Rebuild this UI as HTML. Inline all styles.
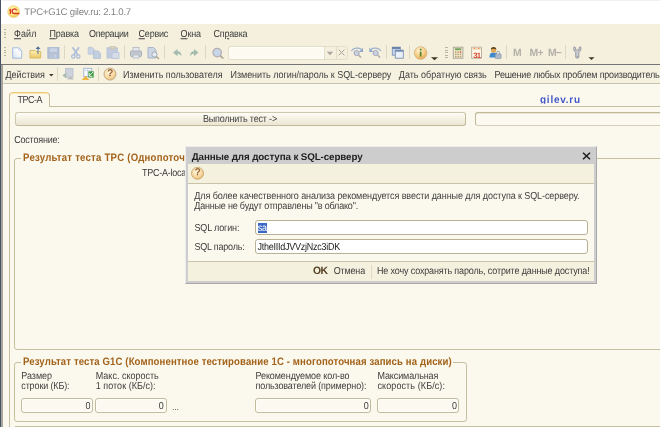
<!DOCTYPE html>
<html><head><meta charset="utf-8">
<style>
html,body{margin:0;padding:0;}
body{width:660px;height:427px;overflow:hidden;position:relative;background:#fbf9ed;font-family:"Liberation Sans",sans-serif;font-size:8.8px;color:#222;text-rendering:geometricPrecision;}
.a{position:absolute;}
.t{position:absolute;white-space:nowrap;line-height:12px;filter:blur(0.350px);}
svg{filter:blur(0.300px);}
u{text-decoration:underline;text-decoration-thickness:0.700px;text-underline-offset:1px;text-decoration-color:#555}
.sep{position:absolute;width:1px;background:#ddd8c2;}
.inp{position:absolute;background:#fff;border:1px solid #b9b196;border-radius:3px;box-sizing:border-box;}
.ro{background:#fcfaf0;box-shadow:inset 0 0 0 1px #fffffb;border-color:#c1ba9c}
.grp{position:absolute;border:1px solid #c5be9f;border-radius:3px;box-sizing:border-box;}
.gtbg{position:absolute;background:#fbf9ed;height:4px}
</style></head><body>
<!-- title bar -->
<div class="a" style="left:0;top:0;width:660px;height:24px;background:#fff"></div>
<div class="a" style="left:2px;top:0;width:658px;height:1px;background:#f1f1f1"></div>
<svg class="a" style="left:7px;top:4.500px" width="14" height="14" viewBox="0 0 14 14"><defs><radialGradient id="g1c" cx="0.450" cy="0.400" r="0.600"><stop offset="0" stop-color="#fffbd8"/><stop offset="0.550" stop-color="#fbe88a"/><stop offset="1" stop-color="#eec44a"/></radialGradient></defs><circle cx="6.600" cy="6.600" r="6.100" fill="url(#g1c)" stroke="#ecd9a0" stroke-width="0.500"/><path d="M2.400 5.300 L3.400 4.700 V9 M9.600 5.400 A2.300 2.300 0 1 0 7.800 8.500 H12.400" fill="none" stroke="#de3a22" stroke-width="1.350"/></svg>
<!-- menu + toolbar bg -->
<div class="a" style="left:0;top:24px;width:660px;height:40px;background:#f4f0dd"></div>
<div class="a" style="left:0;top:64px;width:660px;height:1px;background:#757575"></div>
<div class="a" style="left:0;top:65px;width:660px;height:18px;background:#f6f2e1"></div>
<div class="a" style="left:0;top:83px;width:660px;height:1px;background:#c9c3ab"></div>
<!-- window left border -->
<div class="a" style="left:0;top:0;width:1.400px;height:427px;background:#465265"></div>
<div class="a" style="left:1.400px;top:65px;width:1.300px;height:362px;background:#a9a79d"></div>
<!-- grips -->
<div class="a" style="left:3.500px;top:29.300px;width:2.200px;height:8.500px;background:repeating-linear-gradient(#b9b49c 0 1px,transparent 1px 2.500px)"></div>
<div class="a" style="left:3.500px;top:46.800px;width:2.200px;height:10.500px;background:repeating-linear-gradient(#b9b49c 0 1px,transparent 1px 2.500px)"></div>
<div class="a" style="left:445px;top:47px;width:2.600px;height:11px;background:repeating-linear-gradient(#b9b49c 0 1px,transparent 1px 2.500px)"></div>
<!-- toolbar separators -->
<div class="sep" style="left:64px;top:45px;height:14px"></div>
<div class="sep" style="left:124px;top:45px;height:14px"></div>
<div class="sep" style="left:164px;top:45px;height:14px"></div>
<div class="sep" style="left:205px;top:45px;height:14px"></div>
<div class="sep" style="left:386px;top:45px;height:14px"></div>
<div class="sep" style="left:409px;top:45px;height:14px"></div>
<div class="sep" style="left:506px;top:45px;height:14px"></div>
<div class="sep" style="left:565px;top:45px;height:14px"></div>
<!-- toolbar icons -->
<svg class="a" style="left:0;top:43px" width="660" height="21" viewBox="0 43 660 21">
<!-- new -->
<defs><linearGradient id="gn" x1="1" y1="0" x2="0" y2="1"><stop offset="0.300" stop-color="#ffffff"/><stop offset="1" stop-color="#d4e1f3"/></linearGradient><linearGradient id="gf" x1="0" y1="0" x2="0" y2="1"><stop offset="0" stop-color="#fcf0b4"/><stop offset="1" stop-color="#eac869"/></linearGradient></defs>
<path d="M12.700 47.800 H18.800 L21.700 50.700 V58.200 H12.700 Z" fill="url(#gn)" stroke="#a5bcde" stroke-width="1"/><path d="M18.800 47.800 V50.700 H21.700" fill="none" stroke="#b9cbe6" stroke-width="0.700"/>
<!-- open -->
<path d="M30 50.500 H35 L36 51.500 H40.700 V58 H30 Z" fill="url(#gf)" stroke="#d6b65c" stroke-width="0.900"/><path d="M38 46.300 L35.600 49 H40.400 Z" fill="#47698f"/><path d="M38 48.500 V54" stroke="#5f7f9f" stroke-width="1.100"/>
<!-- save -->
<rect x="47.800" y="47.500" width="11.200" height="10.800" fill="#b4c0d6" stroke="#a9b7cf" stroke-width="0.800"/><rect x="50" y="48.300" width="7" height="3.700" fill="#c9d3e3"/><rect x="51" y="54.300" width="5.500" height="3.700" fill="#c5cedd"/><rect x="52" y="55" width="1.500" height="2.500" fill="#a9b7cf"/>
<!-- cut -->
<path d="M72.500 47.300 L77.800 55 M79 47.300 L73.700 55" stroke="#b1c0da" stroke-width="1.900" fill="none"/><circle cx="73.300" cy="56.500" r="1.700" fill="none" stroke="#a9badb" stroke-width="1.200"/><circle cx="78.300" cy="56.500" r="1.700" fill="none" stroke="#a9badb" stroke-width="1.200"/>
<!-- copy -->
<path d="M88.200 47.400 H92.300 L94.500 49.600 V54.200 H88.200 Z" fill="#cad3e3" stroke="#b7c3d9" stroke-width="0.800"/><path d="M93.500 51 H98.300 L100.500 53.200 V58.400 H93.500 Z" fill="#c3cde0" stroke="#b1bed6" stroke-width="0.800"/>
<!-- paste -->
<rect x="107" y="47.800" width="10.300" height="10.200" fill="#c2ccde" stroke="#b3bfd5" stroke-width="0.800"/><rect x="110.500" y="46.300" width="4.500" height="2.600" fill="#dcd6c0" stroke="#c3bda5" stroke-width="0.600"/><rect x="112" y="52.600" width="7" height="6" fill="#d6dde9" stroke="#b7c3d9" stroke-width="0.800"/>
<!-- print -->
<rect x="130.500" y="51" width="11" height="5.500" rx="1" fill="#c3c7cf" stroke="#a9afba"/><rect x="133" y="47.500" width="6" height="3.500" fill="#e3e6ec" stroke="#b1b7c2" stroke-width="0.8"/><rect x="133" y="55" width="6" height="3" fill="#e9ebf0" stroke="#b1b7c2" stroke-width="0.8"/>
<!-- preview -->
<path d="M148 47.5 H153.500 L156 50 V58 H148 Z" fill="#ccd5e3" stroke="#a9b6cc"/><circle cx="154.500" cy="54.500" r="2.600" fill="#e4ebf5" stroke="#a3a9b5" stroke-width="1"/><path d="M156.500 56.500 L159 59" stroke="#b5a78f" stroke-width="1.500"/>
<!-- undo -->
<path d="M173 52.500 L177.500 49 V51.300 C180 51.300 181.500 53 181.500 56.300 C180.500 54.600 179.500 54 177.500 54 V56.200 Z" fill="#a3bcae"/>
<!-- redo -->
<path d="M198.500 52.500 L194 49 V51.300 C191.500 51.300 190 53 190 56.300 C191 54.600 192 54 194 54 V56.200 Z" fill="#a3bcae"/>
<!-- search magnifier -->
<path d="M220.300 55.800 L223.300 58.600" stroke="#b7a99b" stroke-width="1.900"/><circle cx="217.200" cy="52.600" r="4.200" fill="#c8d6ea" stroke="#b5abb0" stroke-width="1.300"/>
<!-- find next/prev -->
<g><path d="M358.500 55 L361 57.600" stroke="#b3a9b0" stroke-width="1.500"/><circle cx="356.600" cy="53" r="2.600" fill="#c9d1e0" stroke="#a9a9ba" stroke-width="1"/><path d="M351.300 51 C353.500 47.800 358.500 47.300 361.500 49.500" fill="none" stroke="#9bb0d0" stroke-width="1.300"/><path d="M363 47.800 V52 H359 Z" fill="#8fa6cc"/></g>
<g><path d="M377.500 55 L380 57.600" stroke="#b3a9b0" stroke-width="1.500"/><circle cx="375.600" cy="53" r="2.600" fill="#c9d1e0" stroke="#a9a9ba" stroke-width="1"/><path d="M381 51 C378.800 47.800 373.800 47.300 370.800 49.500" fill="none" stroke="#9bb0d0" stroke-width="1.300"/><path d="M369.300 47.800 V52 H373.300 Z" fill="#8fa6cc"/></g>
<!-- windows -->
<rect x="392.300" y="47.200" width="8" height="8" fill="#c7d5ea" stroke="#7f95b8" stroke-width="0.900"/><rect x="392.300" y="47.200" width="8" height="1.600" fill="#56759f"/><rect x="395.300" y="50.200" width="8" height="8" fill="#eaf0f8" stroke="#7d90b2" stroke-width="0.900"/><rect x="395.300" y="50.200" width="8" height="1.500" fill="#6c86b0"/>
<!-- info -->
<defs><radialGradient id="gi" cx="0.4" cy="0.3" r="0.8"><stop offset="0" stop-color="#fff3d4"/><stop offset="0.550" stop-color="#f7cd84"/><stop offset="1" stop-color="#dd9c40"/></radialGradient></defs>
<circle cx="420.600" cy="53" r="6.300" fill="url(#gi)" stroke="#d2b382" stroke-width="0.800"/><rect x="419.800" y="51.600" width="1.700" height="5" fill="#55802a"/><rect x="419.800" y="48.800" width="1.700" height="1.700" fill="#55802a"/>
<path d="M431 57.300 H438 L434.500 60.300 Z" fill="#3a3426"/>
<!-- calc -->
<rect x="453.300" y="47.200" width="9.600" height="11" fill="#f4ebcf" stroke="#a5a397" stroke-width="0.900"/><rect x="455" y="48.300" width="6.300" height="1.900" fill="#6fa05a"/><g fill="#b9a078"><rect x="455" y="51.300" width="1.500" height="1.500"/><rect x="457.400" y="51.300" width="1.500" height="1.500"/><rect x="455" y="53.600" width="1.500" height="1.500"/><rect x="457.400" y="53.600" width="1.500" height="1.500"/><rect x="455" y="55.900" width="1.500" height="1.500"/><rect x="457.400" y="55.900" width="1.500" height="1.500"/><rect x="459.800" y="53.600" width="1.500" height="1.500"/><rect x="459.800" y="55.900" width="1.500" height="1.500"/></g><rect x="459.800" y="51.300" width="1.500" height="1.500" fill="#d2503a"/>
<!-- calendar -->
<rect x="471.700" y="47.200" width="9.800" height="11" fill="#fff9ec" stroke="#b3aa98" stroke-width="0.900"/><rect x="472.200" y="47.700" width="8.800" height="2.300" fill="#f4dfc0"/><circle cx="474.500" cy="48.300" r="0.800" fill="#e08a4a"/><circle cx="478.700" cy="48.300" r="0.800" fill="#e08a4a"/>
<!-- user -->
<path d="M489.500 57.500 C489.500 53.500 491 52.600 493.500 52.600 C496 52.600 497.300 53.500 497.300 57.500 Z" fill="#3f8ad0"/><circle cx="493.600" cy="50" r="2.700" fill="#e3aa58"/><path d="M490.900 49.600 A2.700 2.700 0 0 1 496.300 49.600 Q493.600 47.800 490.900 49.600 Z" fill="#5a4322"/><path d="M496.700 54 V52.800 A1.500 1.500 0 0 1 499.700 52.800 V54" fill="none" stroke="#8f9cb0" stroke-width="0.900"/><rect x="495.300" y="54" width="5.800" height="4.600" rx="0.600" fill="#aebaca" stroke="#8393a8" stroke-width="0.600"/>
<!-- wrench -->
<path d="M574 46.800 Q572.800 50.600 575.700 52.200 V57.400 Q577.300 59.200 578.900 57.400 V52.200 Q581.800 50.600 580.600 46.800 L579 47.600 V50 H575.600 V47.600 Z" fill="#c9cacf" stroke="#8f9199" stroke-width="0.800"/><circle cx="577.300" cy="56.600" r="0.700" fill="#8f9199"/>
<path d="M588.500 57.300 H594.500 L591.500 60 Z" fill="#3a3426"/>
</svg>
<span class="t" style="left:473.300px;top:49.700px;font-size:7.800px;font-weight:bold;color:#d8452e;letter-spacing:-0.900px">31</span>
<!-- search input -->
<div class="a" style="left:227.500px;top:45.500px;width:120px;height:14px;border:1px solid #e3dec8;border-radius:3px;box-sizing:border-box"></div>
<div class="a" style="left:228.500px;top:46.500px;width:95px;height:12px;background:#fdfbf1;border:1px solid #fffefa;border-radius:2px 0 0 2px;box-sizing:border-box"></div>
<div class="a" style="left:323.500px;top:46px;width:1px;height:13px;background:#e3dec8"></div>
<div class="a" style="left:335.500px;top:46px;width:1px;height:13px;background:#e3dec8"></div>
<svg class="a" style="left:326px;top:50.500px" width="8" height="5" viewBox="0 0 8 5"><path d="M0.800 0.800 H7.200 L4 4.200 Z" fill="#a9a8a0"/></svg>
<svg class="a" style="left:337.500px;top:49.300px" width="7" height="7" viewBox="0 0 7 7"><path d="M0.600 0.600 L6.400 6.400 M6.400 0.600 L0.600 6.400" stroke="#a3a29b" stroke-width="1"/></svg>
<!-- cmd bar -->
<svg class="a" style="left:48.700px;top:73.500px" width="5" height="3" viewBox="0 0 5 3"><path d="M0 0 H4.600 L2.300 2.600 Z" fill="#43392a"/></svg>
<div class="sep" style="left:57px;top:67px;height:14px"></div>
<div class="sep" style="left:98.300px;top:67px;height:14px"></div>
<svg class="a" style="left:60px;top:66px" width="60" height="17" viewBox="60 66 60 17">
<rect x="65.600" y="68.300" width="7.400" height="9" fill="#cdd3dd" stroke="#b5bdcb" stroke-width="0.800"/><path d="M62.300 75.500 L66.300 72.800 V78.200 Z" fill="#a5b9ad"/><path d="M67 79.500 L70.500 76 L74 79.500 Z" fill="#bdbdbd"/>
<rect x="83.800" y="68.300" width="8" height="8.300" fill="#fbfcfe" stroke="#9fb3d3" stroke-width="0.900"/><path d="M84.500 70.500 H91 M87.500 69 V76" stroke="#c3d0e4" stroke-width="0.700"/><path d="M81.800 80 L85.600 75.700 L89.400 80 Z" fill="#efb640"/><path d="M88.300 71.300 L93.700 71.300 L93.700 77.600 L88.300 77.600 Z" fill="#3f9a48"/><path d="M93 72 L89.500 75.500 M89.300 73 V76.300 H92.500" stroke="#e9f5ea" stroke-width="0.900" fill="none"/>
<defs><radialGradient id="gh" cx="0.420" cy="0.350" r="0.750"><stop offset="0" stop-color="#fff6de"/><stop offset="0.600" stop-color="#f8d79e"/><stop offset="1" stop-color="#e0ae62"/></radialGradient></defs>
<circle cx="110" cy="74.100" r="6" fill="url(#gh)" stroke="#b9a788" stroke-width="0.900"/>
</svg>
<span class="t" style="left:107.500px;top:68px;font-size:9.500px;font-weight:normal;color:#8a5a2a;-webkit-text-stroke:0.300px #8a5a2a">?</span>
<!-- tab -->
<div class="a" style="left:9px;top:91.500px;width:41px;height:15px;border:1px solid #c5be9f;border-bottom:none;border-radius:4px 4px 0 0;box-sizing:border-box;background:#fbf9ed;border-top-color:#ebc875;box-shadow:inset 0 1px 0 #fbe9b4"></div>
<div class="a" style="left:49.500px;top:105.800px;width:611px;height:1px;background:#c5be9f"></div>
<div class="a" style="left:9px;top:105px;width:1px;height:322px;background:#c5be9f"></div>
<!-- exec button -->
<div class="inp" style="left:14.500px;top:111.500px;width:451.300px;height:14px;background:linear-gradient(#fdfcf5,#ebe6d2);border-color:#cdc7ac #c1ba9c #c1ba9c #cdc7ac;box-shadow:inset 0 1px 0 #fffef9"></div>
<div class="inp" style="left:475px;top:111.500px;width:200px;height:14px;background:#fcfaf0;border-color:#bfb899 #d6d0b8 #d6d0b8 #bfb899;box-shadow:inset 0 1px 0 #e9e5d3"></div>
<!-- group1 -->
<div class="grp" style="left:14.400px;top:158px;width:700px;height:191.500px"></div>
<div class="gtbg" style="left:21px;top:156px;width:170px"></div>
<!-- group2 -->
<div class="grp" style="left:14.400px;top:362px;width:452.600px;height:59.500px"></div>
<div class="gtbg" style="left:21px;top:360px;width:432px"></div>
<div class="a" style="left:15px;top:425.500px;width:645px;height:1px;background:#c5be9f"></div>
<div class="inp ro" style="left:20.500px;top:397.800px;width:72px;height:14.900px"></div>
<div class="inp ro" style="left:94.500px;top:397.800px;width:72px;height:14.900px"></div>
<div class="inp ro" style="left:254.500px;top:397.800px;width:116px;height:14.900px"></div>
<div class="inp ro" style="left:376.500px;top:397.800px;width:82.500px;height:14.900px"></div>
<span class="t" style="left:24.30px;top:7.00px;font-size:9.6px;font-weight:normal;color:#858585;letter-spacing:-0.215px;transform:scaleY(1.0);transform-origin:0 8.00px;">TPC+G1C gilev.ru: 2.1.0.7</span>
<span class="t" style="left:14.00px;top:28.00px;font-size:9.0px;font-weight:normal;color:#3c3c3c;letter-spacing:0.115px;transform:scaleY(1.13);transform-origin:0 9.00px;"><u>Ф</u>айл</span>
<span class="t" style="left:49.40px;top:28.00px;font-size:9.0px;font-weight:normal;color:#3c3c3c;letter-spacing:-0.168px;transform:scaleY(1.13);transform-origin:0 9.00px;"><u>П</u>равка</span>
<span class="t" style="left:89.00px;top:28.00px;font-size:9.0px;font-weight:normal;color:#3c3c3c;letter-spacing:-0.326px;transform:scaleY(1.13);transform-origin:0 9.00px;">Операции</span>
<span class="t" style="left:138.60px;top:28.00px;font-size:9.0px;font-weight:normal;color:#3c3c3c;letter-spacing:-0.238px;transform:scaleY(1.13);transform-origin:0 9.00px;"><u>С</u>ервис</span>
<span class="t" style="left:180.60px;top:28.00px;font-size:9.0px;font-weight:normal;color:#3c3c3c;letter-spacing:-0.134px;transform:scaleY(1.13);transform-origin:0 9.00px;"><u>О</u>кна</span>
<span class="t" style="left:213.40px;top:28.00px;font-size:9.0px;font-weight:normal;color:#3c3c3c;letter-spacing:-0.190px;transform:scaleY(1.13);transform-origin:0 9.00px;">Сп<u>р</u>авка</span>
<span class="t" style="left:513.00px;top:48.00px;font-size:10.4px;font-weight:bold;color:#b2b0a8;letter-spacing:0.344px;transform:scaleY(1.0);transform-origin:0 8.40px;">M</span>
<span class="t" style="left:529.50px;top:48.00px;font-size:10.4px;font-weight:bold;color:#b2b0a8;letter-spacing:-0.617px;transform:scaleY(1.0);transform-origin:0 8.40px;">M+</span>
<span class="t" style="left:548.00px;top:48.00px;font-size:10.4px;font-weight:bold;color:#b2b0a8;letter-spacing:-0.867px;transform:scaleY(1.0);transform-origin:0 8.40px;">M−</span>
<span class="t" style="left:5.50px;top:69.00px;font-size:9.0px;font-weight:normal;color:#3c3c3c;letter-spacing:0.008px;transform:scaleY(1.13);transform-origin:0 9.00px;">Действия</span>
<span class="t" style="left:123.00px;top:69.00px;font-size:9.0px;font-weight:normal;color:#3c3c3c;letter-spacing:-0.028px;transform:scaleY(1.13);transform-origin:0 9.00px;">Изменить пользователя</span>
<span class="t" style="left:230.50px;top:69.00px;font-size:9.0px;font-weight:normal;color:#3c3c3c;letter-spacing:-0.046px;transform:scaleY(1.13);transform-origin:0 9.00px;">Изменить логин/пароль к SQL-серверу</span>
<span class="t" style="left:398.80px;top:69.00px;font-size:9.0px;font-weight:normal;color:#3c3c3c;letter-spacing:0.005px;transform:scaleY(1.13);transform-origin:0 9.00px;">Дать обратную связь</span>
<span class="t" style="left:494.50px;top:69.00px;font-size:9.0px;font-weight:normal;color:#3c3c3c;letter-spacing:-0.201px;transform:scaleY(1.13);transform-origin:0 9.00px;">Решение любых проблем производительности</span>
<span class="t" style="left:17.50px;top:94.00px;font-size:9.0px;font-weight:normal;color:#3c3c3c;letter-spacing:-0.480px;transform:scaleY(1.13);transform-origin:0 9.00px;">TPC-A</span>
<span class="t" style="left:540.00px;top:95.00px;font-size:10px;font-weight:bold;color:#4459c8;letter-spacing:0.746px;transform:scaleY(1.06);transform-origin:0 8.30px;clip-path:inset(0 0 3.200px 0);">gilev.ru</span>
<span class="t" style="left:203.00px;top:113.00px;font-size:9.0px;font-weight:normal;color:#3c3c3c;letter-spacing:-0.184px;transform:scaleY(1.13);transform-origin:0 9.00px;">Выполнить тест -&gt;</span>
<span class="t" style="left:14.20px;top:134.00px;font-size:9.0px;font-weight:normal;color:#3c3c3c;letter-spacing:-0.192px;transform:scaleY(1.13);transform-origin:0 9.00px;">Состояние:</span>
<span class="t" style="left:23.00px;top:153.00px;font-size:9.6px;font-weight:bold;color:#a2621a;letter-spacing:0.236px;transform:scaleY(1.13);transform-origin:0 8.00px;">Результат теста TPC (Однопоточный)</span>
<span class="t" style="left:142.00px;top:167.00px;font-size:9.0px;font-weight:normal;color:#3c3c3c;letter-spacing:-0.252px;transform:scaleY(1.13);transform-origin:0 9.00px;">TPC-A-local</span>
<span class="t" style="left:23.00px;top:357.00px;font-size:9.6px;font-weight:bold;color:#a2621a;letter-spacing:0.111px;transform:scaleY(1.13);transform-origin:0 8.00px;">Результат теста G1C (Компонентное тестирование 1С - многопоточная запись на диски)</span>
<span class="t" style="left:21.25px;top:370.00px;font-size:9.0px;font-weight:normal;color:#3c3c3c;letter-spacing:-0.031px;transform:scaleY(1.13);transform-origin:0 8.75px;">Размер</span>
<span class="t" style="left:21.25px;top:380.00px;font-size:9.0px;font-weight:normal;color:#3c3c3c;letter-spacing:-0.125px;transform:scaleY(1.13);transform-origin:0 9.50px;">строки (КБ):</span>
<span class="t" style="left:95.75px;top:370.00px;font-size:9.0px;font-weight:normal;color:#3c3c3c;letter-spacing:-0.001px;transform:scaleY(1.13);transform-origin:0 8.75px;">Макс. скорость</span>
<span class="t" style="left:95.75px;top:380.00px;font-size:9.0px;font-weight:normal;color:#3c3c3c;letter-spacing:0.030px;transform:scaleY(1.13);transform-origin:0 9.50px;">1 поток (КБ/с):</span>
<span class="t" style="left:255.50px;top:370.00px;font-size:9.0px;font-weight:normal;color:#3c3c3c;letter-spacing:-0.098px;transform:scaleY(1.13);transform-origin:0 8.75px;">Рекомендуемое кол-во</span>
<span class="t" style="left:255.50px;top:380.00px;font-size:9.0px;font-weight:normal;color:#3c3c3c;letter-spacing:-0.139px;transform:scaleY(1.13);transform-origin:0 9.50px;">пользователей (примерно):</span>
<span class="t" style="left:377.50px;top:370.00px;font-size:9.0px;font-weight:normal;color:#3c3c3c;letter-spacing:-0.117px;transform:scaleY(1.13);transform-origin:0 8.75px;">Максимальная</span>
<span class="t" style="left:377.50px;top:380.00px;font-size:9.0px;font-weight:normal;color:#3c3c3c;letter-spacing:0.093px;transform:scaleY(1.13);transform-origin:0 9.50px;">скорость (КБ/с):</span>
<span class="t" style="left:85.50px;top:400.00px;font-size:9.0px;font-weight:normal;color:#3c3c3c;letter-spacing:-1.016px;transform:scaleY(1.13);transform-origin:0 9.25px;">0</span>
<span class="t" style="left:158.75px;top:400.00px;font-size:9.0px;font-weight:normal;color:#3c3c3c;letter-spacing:-0.766px;transform:scaleY(1.13);transform-origin:0 9.25px;">0</span>
<span class="t" style="left:363.75px;top:400.00px;font-size:9.0px;font-weight:normal;color:#3c3c3c;letter-spacing:-0.766px;transform:scaleY(1.13);transform-origin:0 9.25px;">0</span>
<span class="t" style="left:452.00px;top:400.00px;font-size:9.0px;font-weight:normal;color:#3c3c3c;letter-spacing:-0.766px;transform:scaleY(1.13);transform-origin:0 9.25px;">0</span>
<span class="t" style="left:172.00px;top:401.00px;font-size:9.0px;font-weight:normal;color:#555;letter-spacing:-0.255px;transform:scaleY(1.13);transform-origin:0 9.00px;">...</span>
<!-- dialog -->
<div class="a" style="left:184.700px;top:146.300px;width:412.500px;height:137.600px;background:#cdcdcd;box-sizing:border-box;border-left:1px solid #ececec;border-top:1px solid #ececec;border-right:1px solid #a9a9a9;border-bottom:1px solid #a9a9a9"></div>
<div class="a" style="left:188px;top:164px;width:406.200px;height:19px;background:#f5f1df"></div>
<div class="a" style="left:188px;top:183px;width:406.200px;height:1px;background:#c9c3ab"></div>
<div class="a" style="left:188px;top:184px;width:406.200px;height:77.500px;background:#fbf9ed"></div>
<div class="a" style="left:188px;top:261px;width:406.200px;height:1px;background:#c9c3ab"></div>
<div class="a" style="left:188px;top:262px;width:406.200px;height:18.800px;background:#f5f1df"></div>
<svg class="a" style="left:582px;top:152px" width="9" height="8" viewBox="0 0 9 8"><path d="M1 0.700 L8 7.300 M8 0.700 L1 7.300" stroke="#1c1c1c" stroke-width="1.500"/></svg>
<svg class="a" style="left:190px;top:166px" width="15" height="15" viewBox="0 0 15 15"><circle cx="7.500" cy="7.300" r="6" fill="url(#gh)" stroke="#c2a066" stroke-width="0.800"/></svg>
<span class="t" style="left:194.900px;top:167.100px;font-size:9.500px;font-weight:normal;color:#8a5a2a;-webkit-text-stroke:0.300px #8a5a2a">?</span>
<div class="inp" style="left:255px;top:220px;width:333px;height:15px"></div>
<div class="inp" style="left:255px;top:239px;width:333px;height:15.300px"></div>
<div class="a" style="left:257.500px;top:222.700px;width:9.300px;height:10.300px;background:#3a66c4"></div>
<div class="sep" style="left:370.500px;top:265px;height:14px"></div>
<span class="t" style="left:191.75px;top:152.00px;font-size:9.8px;font-weight:bold;color:#222;letter-spacing:-0.112px;transform:scaleY(1.0);transform-origin:0 8.00px;">Данные для доступа к SQL-серверу</span>
<span class="t" style="left:194.25px;top:190.00px;font-size:9.0px;font-weight:normal;color:#3c3c3c;letter-spacing:-0.084px;transform:scaleY(1.13);transform-origin:0 8.75px;">Для более качественного анализа рекомендуется ввести данные для доступа к SQL-серверу.</span>
<span class="t" style="left:194.25px;top:200.00px;font-size:9.0px;font-weight:normal;color:#3c3c3c;letter-spacing:-0.187px;transform:scaleY(1.13);transform-origin:0 9.40px;">Данные не будут отправлены "в облако".</span>
<span class="t" style="left:194.50px;top:222.00px;font-size:9.0px;font-weight:normal;color:#3c3c3c;letter-spacing:-0.158px;transform:scaleY(1.13);transform-origin:0 9.00px;">SQL логин:</span>
<span class="t" style="left:194.50px;top:241.00px;font-size:9.0px;font-weight:normal;color:#3c3c3c;letter-spacing:-0.210px;transform:scaleY(1.13);transform-origin:0 9.50px;">SQL пароль:</span>
<span class="t" style="left:257.80px;top:222.00px;font-size:9.0px;font-weight:normal;color:#fff;letter-spacing:-0.408px;transform:scaleY(1.13);transform-origin:0 9.00px;">sa</span>
<span class="t" style="left:257.50px;top:241.00px;font-size:9.0px;font-weight:normal;color:#1c1c1c;letter-spacing:-0.252px;transform:scaleY(1.13);transform-origin:0 9.50px;">JtheIIIdJVVzjNzc3iDK</span>
<span class="t" style="left:313.00px;top:266.00px;font-size:10.4px;font-weight:bold;color:#544024;letter-spacing:-0.547px;transform:scaleY(1.03);transform-origin:0 8.50px;">OK</span>
<span class="t" style="left:333.75px;top:265.00px;font-size:9.0px;font-weight:normal;color:#3c3c3c;letter-spacing:-0.174px;transform:scaleY(1.13);transform-origin:0 9.50px;">Отмена</span>
<span class="t" style="left:377.00px;top:265.00px;font-size:9.0px;font-weight:normal;color:#3c3c3c;letter-spacing:-0.150px;transform:scaleY(1.13);transform-origin:0 9.50px;">Не хочу сохранять пароль, сотрите данные доступа!</span>
</body></html>
